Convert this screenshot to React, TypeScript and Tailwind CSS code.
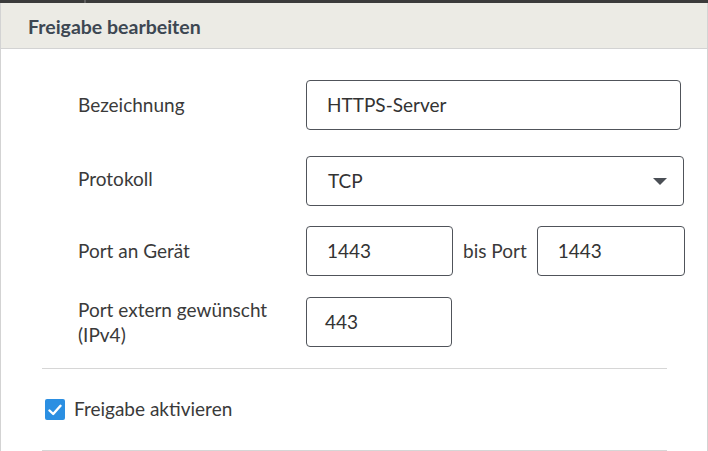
import React from 'react';

const fieldBox =
    'h-[50px] border border-[#50545a] rounded-[4px] bg-white flex items-center text-[19px] text-[#333]';

export default function App() {
    return (
        <div className="w-[708px] h-[451px] overflow-hidden bg-white font-['Lato',sans-serif] text-[#3a3a3a]">
            {/* dark top strip */}
            <div className="relative h-[3px] bg-[#3b3b3b]">
                <div className="absolute left-[84px] top-0 w-[2px] h-full bg-[#5e5e5e]" />
            </div>

            <div className="h-[448px] border-l border-r border-[#d3d3d3]">
                {/* header */}
                <div className="h-[46px] bg-[#ecebe5] border-b border-[#d3d3d3] flex items-center pl-[27px]">
                    <h1 className="text-[19.5px] font-bold text-[#3d4752] pt-[2px]">Freigabe bearbeiten</h1>
                </div>

                {/* form */}
                <div className="pt-[31px]">
                    <div className="flex items-center pl-[77px]">
                        <label className="w-[228px] text-[19px]">Bezeichnung</label>
                        <div className={`${fieldBox} w-[375px] pl-[20px]`}>HTTPS-Server</div>
                    </div>

                    <div className="flex items-center pl-[77px] mt-[26px]">
                        <label className="w-[228px] text-[19px] -mt-[4px]">Protokoll</label>
                        <div className={`${fieldBox} w-[378px] pl-[21px] pr-[16px] justify-between`}>
                            <span>TCP</span>
                            <svg width="14" height="7" viewBox="0 0 14 7">
                                <polygon points="0,0 14,0 7,7" fill="#4a4f55" />
                            </svg>
                        </div>
                    </div>

                    <div className="flex items-center pl-[77px] mt-[20px]">
                        <label className="w-[228px] text-[19px]">Port an Gerät</label>
                        <div className={`${fieldBox} w-[147px] pl-[20px]`}>1443</div>
                        <span className="text-[19px] mx-[10px]">bis Port</span>
                        <div className={`${fieldBox} w-[148px] pl-[20px]`}>1443</div>
                    </div>

                    <div className="flex items-center pl-[77px] mt-[21px]">
                        <label className="w-[228px] text-[19px] leading-[25px]">
                            Port extern gewünscht
                            <br />
                            (IPv4)
                        </label>
                        <div className={`${fieldBox} w-[146px] pl-[18px]`}>443</div>
                    </div>

                    <div className="ml-[41px] w-[625px] h-px bg-[#d6d6d6] mt-[21px]" />

                    <div className="h-[81px] flex items-center pl-[44px] gap-[9px]">
                        <span className="w-[20px] h-[21px] rounded-[2px] bg-[#2b8fe2] flex items-center justify-center">
                            <svg width="14" height="12" viewBox="0 0 14 12" fill="none">
                                <path d="M1.5 6.5 L5.2 10 L12.5 1.8" stroke="#fff" strokeWidth="2.4" strokeLinecap="round" strokeLinejoin="round" />
                            </svg>
                        </span>
                        <span className="text-[19px]">Freigabe aktivieren</span>
                    </div>

                    <div className="ml-[41px] w-[625px] h-px bg-[#d6d6d6]" />
                </div>
            </div>
        </div>
    );
}
